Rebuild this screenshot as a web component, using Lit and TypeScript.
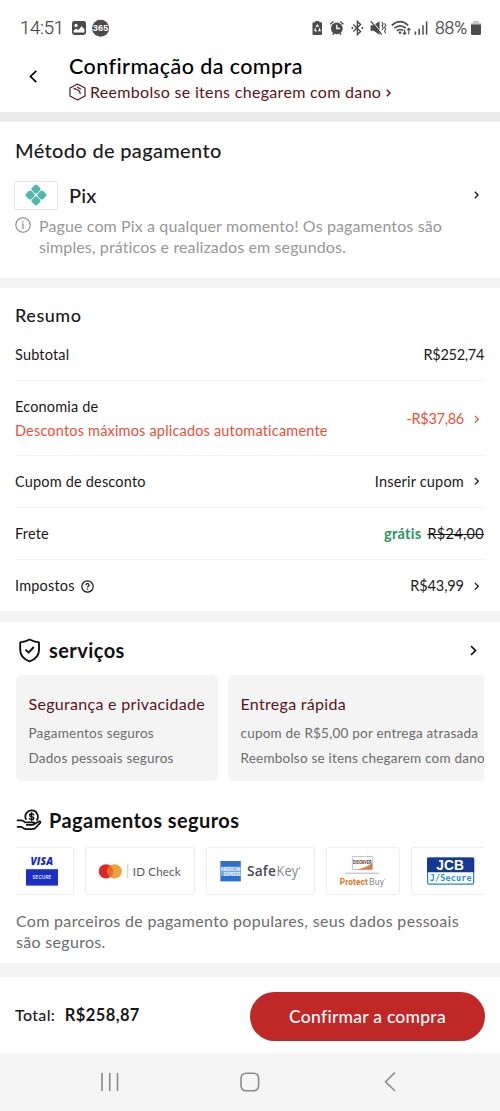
import { LitElement, html, css, svg, nothing } from "lit";
import { customElement } from "lit/decorators.js";

const chevron = (size: number, width: number) => html`
  <svg class="chev" width=${size * 0.6} height=${size} viewBox="0 0 6 10" fill="none" stroke="currentColor" stroke-width=${width}>
    <path d="M1 1 L5 5 L1 9"></path>
  </svg>`;

@customElement("status-bar")
class StatusBar extends LitElement {
  static styles = css`
    :host { display: flex; height: 50px; box-sizing: border-box; padding: 6px 18px 0 20px; align-items: center; justify-content: space-between; color: #4b4b4b; font: 400 18.5px/24px Roboto, sans-serif; }
    .time { letter-spacing: -0.2px; font-weight: 300; width: 43px; white-space: nowrap; -webkit-text-stroke: 0.25px; }
    .left, .right { display: flex; align-items: center; }
    svg { display: block; flex: none; }
    .pct { font-size: 17.5px; letter-spacing: -0.1px; margin-left: 6.5px; width: 35px; white-space: nowrap; font-weight: 300; -webkit-text-stroke: 0.25px; }
  `;
  render() {
    return html`
      <div class="left">
        <span class="time">14:51</span>
        <svg width="48" height="18" viewBox="0 0 48 18">
          <rect x="9" y="2" width="14" height="14" rx="2.4" fill="#4b4b4b"></rect>
          <circle cx="13" cy="6.4" r="1.6" fill="#fff"></circle>
          <path d="M10.6 13.6 V11.4 L13.3 9.4 L15.2 11.3 L18.6 7.2 L21.4 10.2 V13.6 Z" fill="#fff"></path>
          <circle cx="37.6" cy="9.2" r="8.5" fill="#4b4b4b"></circle>
          <text x="37.6" y="12.2" text-anchor="middle" font-family="Liberation Sans" font-weight="700" font-size="8.2" textLength="15.6" lengthAdjust="spacingAndGlyphs" fill="#fff">365</text>
        </svg>
      </div>
      <div class="right">
        <svg width="118" height="18" viewBox="0 0 118 18" fill="none" stroke="#4b4b4b" stroke-width="1.4">
          <path d="M2.5 3.2 H4.2 V2 H8.2 V3.2 H10 Q11 3.2 11 4.2 V15 Q11 16 10 16 H2.5 Q1.5 16 1.5 15 V4.2 Q1.5 3.2 2.5 3.2 Z" fill="#4b4b4b" stroke="none"></path>
          <path d="M5 7.9 L6.3 6 L7.6 7.9 M8.2 9.2 L9.2 11.7 H7 M3.5 11.7 L4.6 9.2 M3.7 11.9 H5.7" stroke="#fff" stroke-width="1.1"></path>
          <circle cx="25.8" cy="9.3" r="5.9" fill="#4b4b4b" stroke="none"></circle>
          <path d="M25.8 5.8 V9.5 H28.8" stroke="#fff" stroke-width="1.3"></path>
          <path d="M19.2 5.2 L22.4 2.5 M32.4 5.2 L29.2 2.5 M21.6 15.7 L22.8 14.2 M30 15.7 L28.8 14.2"></path>
          <path d="M42.3 5.4 L49.6 12.4 L46.4 15.6 V2.4 L49.6 5.6 L42.3 12.6"></path>
          <path d="M40.6 9 h1.6 M50.6 9 h1.6" stroke-width="1.8"></path>
          <g transform="translate(-0.8 0)">
            <path d="M60.4 6.2 H63.4 L69.3 2.2 V15.8 L63.4 11.8 H60.4 Z" fill="#4b4b4b" stroke="none"></path>
            <path d="M61.6 1.6 L72 14.4" stroke="#fff" stroke-width="1"></path>
            <path d="M60.6 2.2 L71.6 15.6" stroke-width="1.3"></path>
            <path d="M71.6 3 l1.4 2 l-1.2 2 l1.3 2 l-1.2 2 M74.4 4.2 l1.1 2 l-1.1 2 l1.1 2 l-1.1 2 l1 2" stroke-width="1.1"></path>
            <path d="M81.6 6.4 Q90 -1 98 6.4 M84.2 9.2 Q90 4.4 95.6 9.2 M86.6 11.8 Q90 9.4 93 11.6" stroke-width="1.6"></path>
            <circle cx="89.8" cy="13.6" r="1.3" fill="#4b4b4b" stroke="none"></circle>
            <path d="M94.4 10.6 V15.2 M92.8 13.6 L94.4 15.4 L96 13.6 M98.6 15.4 V9.4 M97 11.2 L98.6 9.3 L100.2 11.2" stroke-width="1.1"></path>
            <path d="M105.2 12.6 V15.8 M109 9.8 V15.8 M112.8 6.2 V15.8 M116.4 2.6 V15.8" stroke-width="1.5"></path>
          </g>
        </svg>
        <span class="pct">88%</span>
        <svg width="12" height="16" viewBox="0 0 12 16">
          <path d="M3 1 H9 V3 H11 V6 H1 V3 H3 Z" fill="#c9c9c9"></path>
          <path d="M1 4.5 H11 V13.4 Q11 15 9.4 15 H2.6 Q1 15 1 13.4 Z" fill="#4b4b4b"></path>
        </svg>
      </div>`;
  }
}

@customElement("brand-logo")
class BrandLogo extends LitElement {
  static properties = { name: { type: String } };
  declare name: string;
  static styles = css`:host { display: block; } svg { display: block; }`;

  art() {
    switch (this.name) {
      case "visa":
        return svg`<svg width="57" height="46" viewBox="0 0 57 46">
          <text x="14.4" y="17.2" font-family="Open Sans" font-weight="800" font-style="italic" font-size="10.6" textLength="23" lengthAdjust="spacingAndGlyphs" fill="#1a2cb4">VISA</text>
          <rect x="10" y="21.2" width="32" height="16.4" fill="#1b2fc4"></rect>
          <text x="26" y="31.4" text-anchor="middle" font-family="Inter" font-weight="500" font-size="5.4" textLength="19" lengthAdjust="spacingAndGlyphs" fill="#fff">SECURE</text>
        </svg>`;
      case "idcheck":
        return svg`<svg width="108" height="46" viewBox="0 0 108 46">
          <circle cx="20" cy="23.4" r="7.2" fill="#d9292b"></circle>
          <circle cx="28.6" cy="23.4" r="7.2" fill="#eaa23c"></circle>
          <path d="M24.3 17.6 a7.2 7.2 0 0 1 0 11.6 a7.2 7.2 0 0 1 0 -11.6" fill="#ea6a2c"></path>
          <path d="M41.8 16.5 V30" stroke="#c8c8c8" stroke-width="1"></path>
          <text x="46.8" y="27.8" font-family="Lato" font-size="12.2" textLength="48" lengthAdjust="spacingAndGlyphs" fill="#58595b">ID Check</text>
        </svg>`;
      case "safekey":
        return svg`<svg width="107" height="46" viewBox="0 0 107 46">
          <rect x="13.4" y="13" width="20.4" height="20.4" fill="#2c71cc"></rect>
          <rect x="13.4" y="18.6" width="20.4" height="9.4" fill="#76a5e0"></rect>
          <text x="13.8" y="23" font-family="Liberation Sans" font-weight="700" font-size="4.6" textLength="19.6" lengthAdjust="spacingAndGlyphs" fill="#fff">AMERICAN</text>
          <text x="17" y="27.6" font-family="Liberation Sans" font-weight="700" font-size="4.6" textLength="16.6" lengthAdjust="spacingAndGlyphs" fill="#fff">EXPRESS</text>
          <text x="40" y="28.4" font-family="Open Sans" font-weight="600" font-size="14" textLength="29" lengthAdjust="spacingAndGlyphs" fill="#464a53">Safe</text>
          <text x="69.4" y="28.4" font-family="Open Sans" font-weight="400" font-size="14" textLength="22" lengthAdjust="spacingAndGlyphs" fill="#85878b">Key</text>
          <circle cx="92.6" cy="20.2" r="0.7" fill="#85878b"></circle>
        </svg>`;
      case "discover":
        return svg`<svg width="72" height="46" viewBox="0 0 72 46">
          <rect x="25.3" y="8.6" width="20" height="12.8" fill="#fff" stroke="#b9b9b9" stroke-width="0.8"></rect>
          <path d="M45.3 15 V21.4 H29.6 Q40 19.6 45.3 15 Z" fill="#e27a33"></path>
          <text x="26" y="15.6" font-family="Liberation Sans" font-weight="700" font-size="4.8" textLength="18.6" lengthAdjust="spacingAndGlyphs" fill="#2b2b2b">DISCOVER</text>
          <circle cx="35.4" cy="13.9" r="1.7" fill="#e27a33"></circle>
          <path d="M18.2 25.2 H52" stroke="#b5b5b5" stroke-width="1"></path>
          <text x="12.8" y="37" font-family="Roboto" font-weight="700" font-size="9.6" textLength="28.2" lengthAdjust="spacingAndGlyphs" fill="#dd7426">Protect</text>
          <text x="42" y="37" font-family="Roboto" font-size="9.6" textLength="15" lengthAdjust="spacingAndGlyphs" fill="#858585">Buy</text>
          <circle cx="58" cy="31" r="0.6" fill="#858585"></circle>
        </svg>`;
      default:
        return svg`<svg width="80" height="46" viewBox="0 0 80 46">
          <rect x="15.6" y="10.2" width="46" height="26" rx="1.2" fill="#fff" stroke="#2787c4" stroke-width="1.2"></rect>
          <path d="M15 11 q0 -1.4 1.4 -1.4 H60.8 q1.4 0 1.4 1.4 V24.3 H15 Z" fill="#14398f"></path>
          <text x="38.2" y="21.9" text-anchor="middle" font-family="Liberation Sans" font-weight="700" font-size="15" textLength="28" lengthAdjust="spacingAndGlyphs" fill="#fff">JCB</text>
          <text x="38.8" y="33.4" text-anchor="middle" font-family="DejaVu Sans Mono" font-weight="700" font-size="8.8" textLength="42" lengthAdjust="spacingAndGlyphs" fill="#2d93cf">J/Secure</text>
        </svg>`;
    }
  }
  render() { return this.art(); }
}

interface Row { label: string; note?: string; value: string; free?: string; help?: boolean; arrow?: boolean; kind: string; tight?: boolean; }

const rows: Row[] = [
  { label: "Subtotal", value: "R$252,74", kind: "first", tight: true },
  { label: "Economia de", note: "Descontos máximos aplicados automaticamente", value: "-R$37,86", arrow: true, kind: "saving", tight: true },
  { label: "Cupom de desconto", value: "Inserir cupom", arrow: true, kind: "plain" },
  { label: "Frete", value: "R$24,00", free: "grátis", kind: "plain" },
  { label: "Impostos", value: "R$43,99", help: true, arrow: true, kind: "tax", tight: true },
];

@customElement("app-root")
class AppRoot extends LitElement {
  static styles = css`
    :host { display: flex; flex-direction: column; height: 1111px; width: 100%; overflow: hidden; background: #fff; color: #1a1a1a; font: 400 14.5px/20px Lato, sans-serif; letter-spacing: 0.18px; white-space: nowrap; }
    * { box-sizing: border-box; }
    svg { display: block; flex: none; }
    .header { display: flex; height: 62px; color: #000; }
    .back { width: 69px; padding: 20px 0 0 29px; }
    .title { font-weight: 500; font-size: 21.5px; line-height: 28px; letter-spacing: 0.42px; padding-top: 2px; }
    .refund { display: flex; align-items: center; color: #5b1322; font-size: 16px; line-height: 20px; letter-spacing: 0.31px; margin-top: 2px; }
    .refund svg:first-child { margin-right: 4px; }
    .refund .chev { margin: 1px 0 0 5px; }
    .band { flex: none; height: 10px; background: #f4f4f4; }
    .band.dark { background: #e9e9e9; }
    .band.mid { height: 11px; }
    .band.low { height: 14px; }
    h2 { margin: 0; font-weight: 500; }
    .method { height: 156px; padding: 16px 21px 0 15px; }
    .method h2 { font-size: 20px; line-height: 24px; letter-spacing: 0.33px; }
    .pix { display: flex; align-items: center; height: 30px; margin-top: 18px; }
    .pixbox { width: 44px; height: 29px; margin-left: -1px; border: 1px solid #e8e8e8; border-radius: 2px; display: grid; place-items: center; }
    .pixname { font-size: 20px; font-weight: 500; margin-left: 11px; flex: 1; padding-bottom: 1px; }
    .info { display: flex; margin-top: 6px; color: #979797; font-size: 16px; line-height: 20.7px; letter-spacing: 0.12px; }
    .info svg { margin: 1px 8px 0 0; }
    .summary { height: 323px; padding: 16px 15px 0; }
    .summary h2 { font-size: 18px; line-height: 22px; letter-spacing: 0.55px; margin-bottom: 1px; }
    .row { display: flex; align-items: center; justify-content: space-between; height: 52px; border-bottom: 1px solid #f3f3f3; padding-right: 1px; }
    .row.first { height: 54px; padding-top: 3px; }
    .row.saving { height: 75px; padding-top: 1.5px; }
    .row:last-child { border: 0; }
    .label { display: flex; align-items: center; gap: 6px; }
    .note { color: #ea5138; line-height: 20px; margin-top: 4px; letter-spacing: 0.18px; }
    .value { display: flex; align-items: center; }
    .tight { letter-spacing: -0.3px; }
    .tax .tight { letter-spacing: -0.12px; }
    .saving .value { color: #ea5138; }
    .value .chev { margin: 0 5px 0 10px; }
    .free { color: #2a9560; font-weight: 700; margin-right: 6px; letter-spacing: 0.3px; }
    .strike { text-decoration: line-through; letter-spacing: 0.3px; }
    .services { height: 341px; padding: 16px 16px 0; }
    .head { display: flex; align-items: center; height: 25px; color: #111; }
    .head h2 { font-weight: 700; font-size: 20px; line-height: 24px; letter-spacing: 0.43px; margin: -2px 0 0 5px; flex: 1; }
    .head .chev { margin-right: 7px; }
    .strip { display: flex; overflow: hidden; }
    .cards { gap: 10px; margin-top: 12px; height: 106px; }
    .card { flex: none; width: 202px; background: #f4f4f4; border-radius: 6px; padding: 17.5px 12px 0 12.5px; color: #6c6c6c; font-size: 13.5px; line-height: 25px; letter-spacing: 0.22px; }
    .card.wide { width: 290px; }
    .card h3 { margin: 0 0 6.5px; color: #5b1322; font-weight: 400; font-size: 16px; line-height: 22px; letter-spacing: 0.3px; }
    .pay { margin-top: 27px; }
    .logos { gap: 11px; margin-top: 14px; height: 48px; }
    .logo { flex: none; height: 47.5px; border: 1px solid #eeeeee; border-radius: 3px; }
    .logo.cut { border-left: 0; border-radius: 0 3px 3px 0; }
    .partners { color: #6c6c6c; font-size: 16px; line-height: 21px; letter-spacing: 0.31px; margin-top: 14.5px; }
    .total { height: 76px; display: flex; align-items: center; justify-content: space-between; padding: 2px 15px 0 15px; }
    .sum { font-size: 16px; letter-spacing: 0.35px; font-weight: 500; padding-bottom: 2px; }
    .sum b { font-size: 16.5px; font-weight: 700; letter-spacing: 0.4px; margin-left: 9.5px; }
    button { width: 235px; height: 49px; border: 0; border-radius: 25px; background: #c02727; color: #fff; font: 500 17.5px/22px Lato, sans-serif; letter-spacing: 0.25px; padding: 1px 0 0; }
    .nav { height: 58px; background: #f5f5f5; }
    .nav svg { width: 100%; }
  `;

  renderRow(r: Row) {
    return html`<div class="row ${r.kind}">
      <div>
        <div class="label">${r.label}${r.help ? html`
          <svg width="13" height="13" viewBox="0 0 13 13" fill="none" stroke="#1a1a1a" stroke-width="1.2">
            <circle cx="6.5" cy="6.5" r="5.7"></circle>
            <path d="M4.9 5.2 Q4.9 3.7 6.5 3.7 Q8.1 3.7 8.1 5.1 Q8.1 6 7.2 6.4 Q6.5 6.7 6.5 7.6"></path>
            <path d="M6.5 8.5 V9.7"></path>
          </svg>` : nothing}</div>
        ${r.note ? html`<div class="note">${r.note}</div>` : nothing}
      </div>
      <div class="value">
        ${r.free ? html`<span class="free">${r.free}</span><span class="strike">${r.value}</span>`
          : html`<span class=${r.tight ? "tight" : ""}>${r.value}</span>`}
        ${r.arrow ? chevron(8.5, 1.5) : nothing}
      </div>
    </div>`;
  }

  render() {
    return html`
      <status-bar></status-bar>
      <header class="header">
        <div class="back">
          <svg width="9" height="13" viewBox="0 0 9 13" fill="none" stroke="#000" stroke-width="1.7"><path d="M7.3 0.8 L1.5 6.5 L7.3 12.2"></path></svg>
        </div>
        <div>
          <div class="title">Confirmação da compra</div>
          <div class="refund">
            <svg width="17" height="18" viewBox="0 0 17 18" fill="none" stroke="#5b1322" stroke-width="1.2" stroke-linejoin="round">
              <path d="M8.5 1 L16 5 V13 L8.5 17 L1 13 V5 Z"></path>
              <path d="M4.6 5.4 L8.4 6.8 Q11.2 8 11.2 11 M8 4 L12 6.2"></path>
            </svg>
            Reembolso se itens chegarem com dano ${chevron(8, 1.9)}
          </div>
        </div>
      </header>
      <div class="band dark"></div>
      <section class="method">
        <h2>Método de pagamento</h2>
        <div class="pix">
          <div class="pixbox">
            <svg width="22" height="22" viewBox="0 0 22 22">
              <g transform="rotate(45 11 11)" fill="#50b8a9">
                <rect x="3.1" y="3.1" width="7.5" height="7.5" rx="2"></rect>
                <rect x="11.4" y="3.1" width="7.5" height="7.5" rx="2"></rect>
                <rect x="3.1" y="11.4" width="7.5" height="7.5" rx="2"></rect>
                <rect x="11.4" y="11.4" width="7.5" height="7.5" rx="2"></rect>
              </g>
            </svg>
          </div>
          <span class="pixname">Pix</span>
          ${chevron(8, 1.7)}
        </div>
        <div class="info">
          <svg width="16" height="16" viewBox="0 0 16 16" fill="none" stroke="#858585" stroke-width="1.1">
            <circle cx="8" cy="8" r="7.2"></circle><path d="M8 4 V5.4 M6.8 7 H8 V12"></path>
          </svg>
          <div>Pague com Pix a qualquer momento! Os pagamentos são<br>simples, práticos e realizados em segundos.</div>
        </div>
      </section>
      <div class="band"></div>
      <section class="summary">
        <h2>Resumo</h2>
        <div>${rows.map((r) => this.renderRow(r))}</div>
      </section>
      <div class="band mid"></div>
      <section class="services">
        <div class="head">
          <svg width="28" height="25" viewBox="0 0 28 25" fill="none" stroke="#111" stroke-width="1.9" stroke-linejoin="round">
            <path d="M13.6 1.5 Q18 3.8 23 4.4 V12 Q23 20 13.6 23.4 Q4.2 20 4.2 12 V4.4 Q9.2 3.8 13.6 1.5 Z"></path>
            <path d="M9.4 11.6 L12.6 14.6 L17.8 9"></path>
          </svg>
          <h2>serviços</h2>
          ${chevron(11, 1.5)}
        </div>
        <div class="strip cards">
          <div class="card"><h3>Segurança e privacidade</h3>Pagamentos seguros<br>Dados pessoais seguros</div>
          <div class="card wide"><h3>Entrega rápida</h3>cupom de R$5,00 por entrega atrasada<br>Reembolso se itens chegarem com dano</div>
        </div>
        <div class="head pay">
          <svg width="28" height="25" viewBox="0 0 28 25" fill="none" stroke="#111" stroke-width="1.7" stroke-linecap="round" stroke-linejoin="round">
            <path d="M9.8 11.2 A6.3 6.3 0 1 1 21 12"></path>
            <path d="M17.7 6.9 Q17.4 5.7 15.6 5.7 Q13.6 5.7 13.6 7.3 Q13.6 8.5 15.6 8.7 Q17.8 8.9 17.8 10.2 Q17.8 11.6 15.6 11.6 Q13.8 11.6 13.4 10.4 M15.6 4.6 V12.7" stroke-width="1.4"></path>
            <path d="M1.5 12.4 H5.8 Q7.6 12.6 9 14.4 H17.4 Q18.8 14.6 18 16 Q17.6 16.8 16 16.8 H10.6"></path>
            <path d="M18.4 16 L22.8 13.4 Q24.8 13 24.4 14.6 L19.4 20 Q18 21.2 16 21.2 H11 Q9.4 21.2 8 20.4 L5.2 18.8 H1.5"></path>
          </svg>
          <h2>Pagamentos seguros</h2>
        </div>
        <div class="strip logos">
          <div class="logo cut"><brand-logo name="visa"></brand-logo></div>
          <div class="logo"><brand-logo name="idcheck"></brand-logo></div>
          <div class="logo"><brand-logo name="safekey"></brand-logo></div>
          <div class="logo"><brand-logo name="discover"></brand-logo></div>
          <div class="logo"><brand-logo name="jcb"></brand-logo></div>
        </div>
        <div class="partners">Com parceiros de pagamento populares, seus dados pessoais<br>são seguros.</div>
      </section>
      <div class="band low"></div>
      <footer class="total">
        <div class="sum">Total:<b>R$258,87</b></div>
        <button>Confirmar a compra</button>
      </footer>
      <nav class="nav">
        <svg height="58" viewBox="0 0 500 58" fill="none" stroke="#8a8a8a" stroke-width="1.6">
          <path d="M102 20 V38 M109.7 20 V38 M117.5 20 V38"></path>
          <rect x="241" y="20.2" width="17.6" height="17.6" rx="5"></rect>
          <path d="M395 19.5 L385.6 28.8 L395 38"></path>
        </svg>
      </nav>`;
  }
}
